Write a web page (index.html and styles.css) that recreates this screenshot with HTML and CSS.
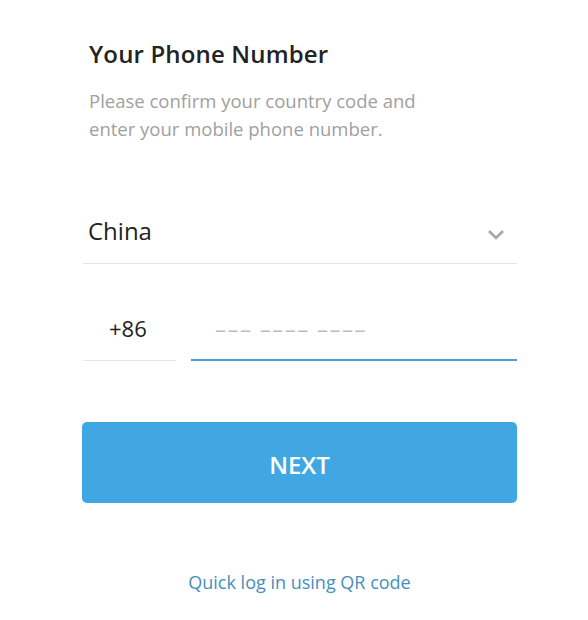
FILE: index.html
```html
<!DOCTYPE html>
<html lang="en">
<head>
<meta charset="utf-8">
<title>Your Phone Number</title>
<link rel="stylesheet" href="styles.css">
</head>
<body>
<main class="login">
  <h1 class="title">Your Phone Number</h1>
  <p class="hint">Please confirm your country code and enter your mobile phone number.</p>

  <div class="country">
    <span class="country-name">China</span>
    <svg class="chevron" width="18" height="11" viewBox="0 0 18 11" aria-hidden="true">
      <path d="M2 2 L9 9 L16 2" fill="none" stroke="#a6a6a6" stroke-width="2.6"/>
    </svg>
  </div>

  <div class="phone">
    <div class="code">+86</div>
    <div class="number"><span class="placeholder">––– –––– ––––</span></div>
  </div>

  <button class="next" type="button">NEXT</button>

  <a class="qr" href="#">Quick log in using QR code</a>
</main>
</body>
</html>
```

FILE: styles.css
```css
html, body {
  margin: 0;
  padding: 0;
  background: #ffffff;
}

body {
  font-family: "Open Sans", "Noto Sans", sans-serif;
  color: #222;
}

.login {
  width: 435px;
  margin-left: 82px;
  padding-top: 38px;
  display: flex;
  flex-direction: column;
}

.title {
  margin: 0 0 0 7px;
  font-size: 24px;
  font-weight: 600;
  line-height: 32px;
  letter-spacing: 0.15px;
  color: #232323;
}

.hint {
  margin: 17px 0 0 7px;
  width: 350px;
  font-size: 18.5px;
  line-height: 28px;
  color: #a0a0a0;
}

.country {
  margin-top: 72px;
  margin-left: 1px;
  display: flex;
  align-items: flex-start;
  justify-content: space-between;
  border-bottom: 1px solid #e4e4e4;
  padding: 0 12px 16px 5px;
}

.country-name {
  font-size: 24px;
  line-height: 32px;
  color: #222;
}

.chevron {
  margin-top: 14px;
}

.phone {
  margin-top: 49px;
  margin-left: 1px;
  display: flex;
  gap: 15px;
}

.code {
  width: 93px;
  box-sizing: border-box;
  border-bottom: 1px solid #e8e8e8;
  padding: 0 0 17px 26px;
  font-size: 22px;
  line-height: 30px;
  color: #222;
}

.number {
  flex: 1;
  box-sizing: border-box;
  border-bottom: 2px solid #4a9fcc;
  padding-left: 24px;
  font-size: 22px;
  line-height: 30px;
}

.placeholder {
  color: #bdbdbd;
  letter-spacing: 1.5px;
}

.next {
  margin-top: 61px;
  height: 81px;
  border: 0;
  border-radius: 5px;
  background: #40a7e2;
  color: #ffffff;
  font-family: inherit;
  font-size: 24px;
  font-weight: 600;
  padding: 4px 0 0;
}

.qr {
  margin-top: 67px;
  align-self: center;
  font-size: 18px;
  line-height: 24px;
  color: #4690bb;
  text-decoration: none;
}
```
